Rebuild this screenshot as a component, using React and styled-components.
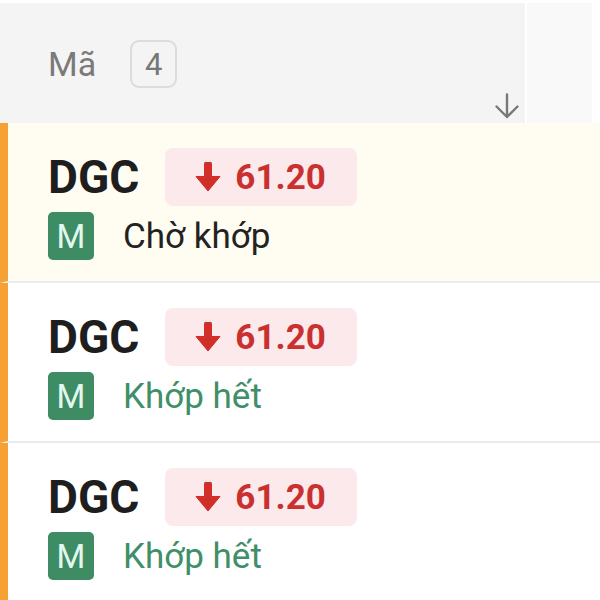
import React from 'react';
import styled, { createGlobalStyle } from 'styled-components';

const orders = [
  { code: 'DGC', price: '61.20', status: 'Chờ khớp', done: false, active: true },
  { code: 'DGC', price: '61.20', status: 'Khớp hết', done: true, active: false },
  { code: 'DGC', price: '61.20', status: 'Khớp hết', done: true, active: false },
];

function App() {
  return (
    <Main>
      <GlobalStyle />
      <Header>
        <HeadCell>
          <TitleRow>
            <Title>Mã</Title>
            <Count>4</Count>
          </TitleRow>
          <SortIcon viewBox="0 0 24 26">
            <path d="M12 1.5v22.5M1.5 13.5l10.5 10.5 10.5-10.5" />
          </SortIcon>
        </HeadCell>
        <SideCell />
      </Header>

      {orders.map((o, i) => (
        <Row key={i} $active={o.active}>
          <TopLine>
            <Code>{o.code}</Code>
            <Price>
              <DownIcon viewBox="0 0 26 30">
                <rect x="9.5" y="0" width="7" height="16" rx="1.5" />
                <path d="M1 14.5h24L13 29z" strokeLinejoin="round" />
              </DownIcon>
              <span>{o.price}</span>
            </Price>
          </TopLine>
          <BottomLine>
            <Type>M</Type>
            <Status $done={o.done}>{o.status}</Status>
          </BottomLine>
        </Row>
      ))}
    </Main>
  );
}

export default App;

const GlobalStyle = createGlobalStyle`
  html, body {
    margin: 0;
    padding: 0;
    background: #ffffff;
  }
  body {
    font-family: Roboto, "Noto Sans", "Liberation Sans", sans-serif;
  }
`;

const Main = styled.div`
  width: 600px;
  height: 600px;
  overflow: hidden;
  padding-top: 3px;
  box-sizing: border-box;
`;

const Header = styled.div`
  display: grid;
  grid-template-columns: 525px 67px 1fr;
  height: 120px;
`;

const HeadCell = styled.div`
  background: #f4f4f5;
  display: flex;
  flex-direction: column;
  padding: 37px 6px 0 48px;
  box-sizing: border-box;
`;

const SideCell = styled.div`
  background: #f9f9fa;
  margin-left: 2px;
`;

const TitleRow = styled.div`
  display: flex;
  align-items: center;
  gap: 34px;
`;

const Title = styled.span`
  font-size: 34px;
  color: #7a7a7a;
`;

const Count = styled.span`
  width: 47px;
  height: 48px;
  box-sizing: border-box;
  border: 2px solid #dcdcdc;
  border-radius: 9px;
  display: flex;
  align-items: center;
  justify-content: center;
  font-size: 31px;
  color: #777777;
`;

const SortIcon = styled.svg`
  align-self: flex-end;
  flex-shrink: 0;
  width: 24px;
  height: 26px;
  margin-top: 5px;
  fill: none;
  stroke: #787878;
  stroke-width: 2.4;
  stroke-linecap: round;
  stroke-linejoin: round;
`;

const Row = styled.div`
  height: 160px;
  box-sizing: border-box;
  background: ${(p) => (p.$active ? '#fffdf2' : '#ffffff')};
  border-left: 8px solid #f6a133;
  border-bottom: 2px solid #ebebeb;
  padding: 25px 0 0 40px;
  display: flex;
  flex-direction: column;
  gap: 6px;
`;

const TopLine = styled.div`
  display: flex;
  align-items: center;
  gap: 26px;
`;

const Code = styled.span`
  font-size: 46px;
  font-weight: 700;
  color: #1e1e1e;
  line-height: 1;
`;

const Price = styled.div`
  height: 58px;
  padding: 0 31px 0 30px;
  box-sizing: border-box;
  border-radius: 8px;
  background: #fce9eb;
  color: #c9302f;
  display: flex;
  align-items: center;
  gap: 14px;
  font-size: 35px;
  font-weight: 700;
`;

const DownIcon = styled.svg`
  width: 26px;
  height: 30px;
  fill: #d12d2a;
  stroke: #d12d2a;
  stroke-width: 1;
  flex-shrink: 0;
`;

const BottomLine = styled.div`
  display: flex;
  align-items: center;
  gap: 29px;
`;

const Type = styled.span`
  width: 46px;
  height: 48px;
  border-radius: 5px;
  background: #3d8c63;
  color: #e2f8ee;
  display: flex;
  align-items: center;
  justify-content: center;
  font-size: 33px;
`;

const Status = styled.span`
  font-size: 35px;
  color: ${(p) => (p.$done ? '#3f8f68' : '#222222')};
`;
